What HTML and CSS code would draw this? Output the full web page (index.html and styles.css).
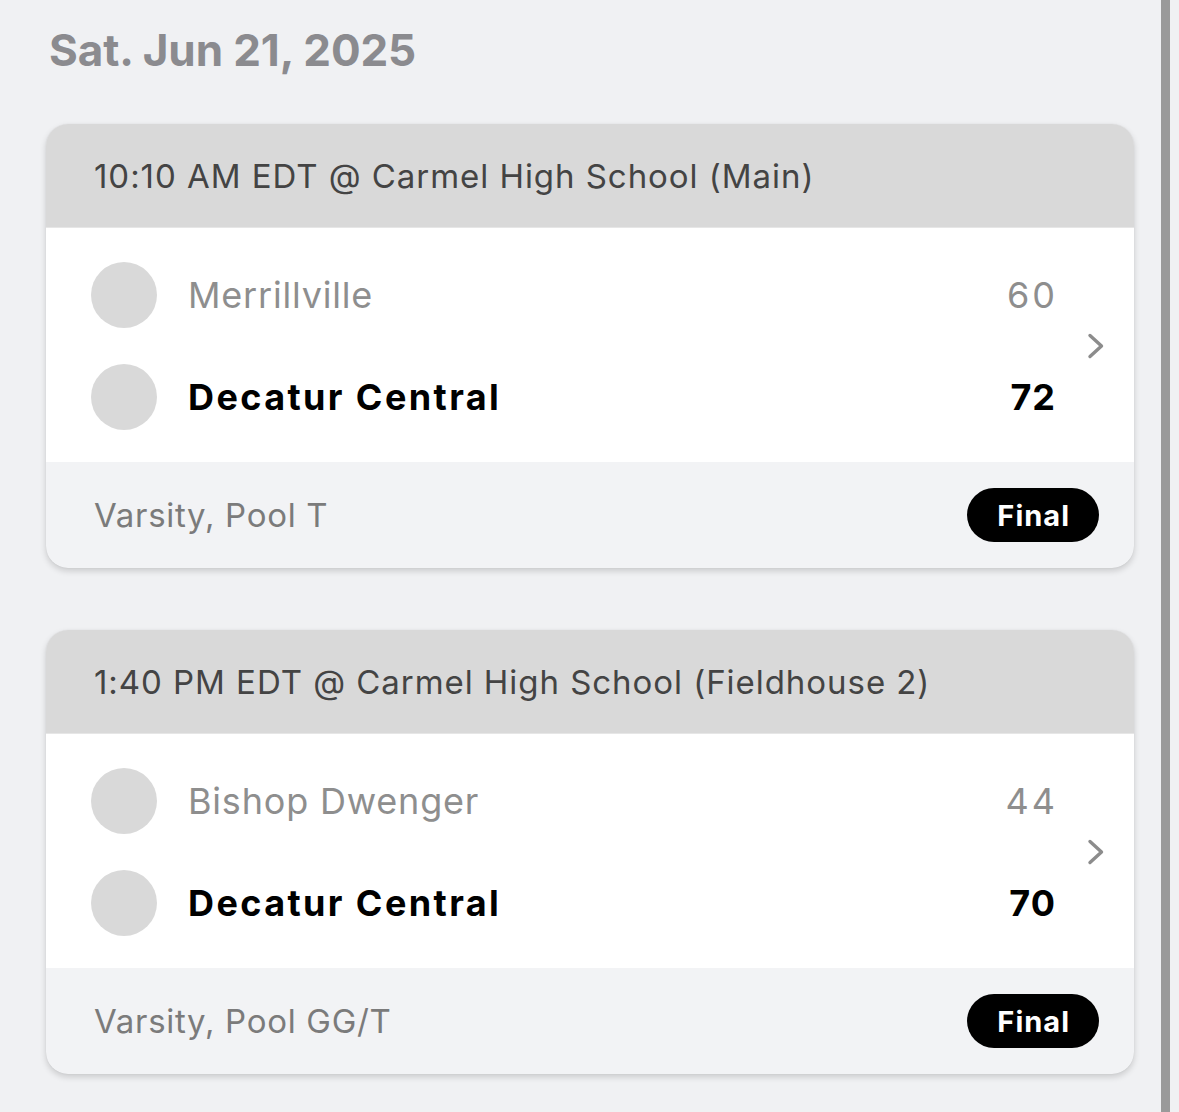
FILE: index.html
```html
<!DOCTYPE html>
<html lang="en">
<head>
<meta charset="utf-8">
<title>Schedule</title>
<link rel="stylesheet" href="styles.css">
</head>
<body>
<div class="page">
  <main class="content">
    <h1 class="date">Sat. Jun 21, 2025</h1>

    <section class="card">
      <header class="card-head">10:10 AM EDT @ Carmel High School (Main)</header>
      <div class="card-body">
        <div class="teams">
          <div class="team loser">
            <span class="logo"></span>
            <span class="name">Merrillville</span>
            <span class="score">60</span>
          </div>
          <div class="team winner">
            <span class="logo"></span>
            <span class="name">Decatur Central</span>
            <span class="score">72</span>
          </div>
        </div>
        <svg class="chevron" viewBox="0 0 20 28" width="20" height="28"><path d="M4 3.5 L15.5 14 L4 24.5" fill="none" stroke="#8c8c8c" stroke-width="3.4" stroke-linecap="round" stroke-linejoin="round"/></svg>
      </div>
      <footer class="card-foot">
        <span class="meta">Varsity, Pool T</span>
        <span class="badge">Final</span>
      </footer>
    </section>

    <section class="card">
      <header class="card-head">1:40 PM EDT @ Carmel High School (Fieldhouse 2)</header>
      <div class="card-body">
        <div class="teams">
          <div class="team loser">
            <span class="logo"></span>
            <span class="name">Bishop Dwenger</span>
            <span class="score">44</span>
          </div>
          <div class="team winner">
            <span class="logo"></span>
            <span class="name">Decatur Central</span>
            <span class="score">70</span>
          </div>
        </div>
        <svg class="chevron" viewBox="0 0 20 28" width="20" height="28"><path d="M4 3.5 L15.5 14 L4 24.5" fill="none" stroke="#8c8c8c" stroke-width="3.4" stroke-linecap="round" stroke-linejoin="round"/></svg>
      </div>
      <footer class="card-foot">
        <span class="meta">Varsity, Pool GG/T</span>
        <span class="badge">Final</span>
      </footer>
    </section>
  </main>
  <div class="scrollbar"></div>
</div>
</body>
</html>
```

FILE: styles.css
```css
html, body {
  margin: 0;
  padding: 0;
  background: #f0f1f3;
}

body {
  font-family: Inter, "Open Sans", "Liberation Sans", sans-serif;
  -webkit-font-smoothing: antialiased;
}

.page {
  display: flex;
  height: 100vh;
  overflow: hidden;
}

.content {
  flex: 1;
  padding: 0 27px 0 46px;
}

.scrollbar {
  width: 9px;
  background: #9a9a9a;
  margin-right: 9px;
  align-self: stretch;
}

.date {
  margin: 0;
  padding: 24px 0 0 3px;
  height: 100px;
  box-sizing: border-box;
  font-size: 44px;
  line-height: 52px;
  font-weight: 700;
  color: #8b8b8f;
  letter-spacing: -0.1px;
}

.card {
  background: #f2f3f5;
  border-radius: 22px;
  overflow: hidden;
  box-shadow: 0 3px 6px rgba(0, 0, 0, 0.16), 0 0 1px rgba(0, 0, 0, 0.12);
  margin-top: 24px;
  margin-bottom: 62px;
}

.card + .card {
  margin-top: 0;
  margin-bottom: 20px;
}

.card-head {
  background: #d9d9d9;
  display: flex;
  align-items: center;
  padding-left: 48px;
  font-size: 33px;
  letter-spacing: 0.95px;
  color: #444444;
  border-bottom: 1px solid #e6e6e6;
  box-sizing: border-box;
  height: 104px;
}

.card-body {
  background: #ffffff;
  display: flex;
  align-items: center;
  padding: 34px 28px 32px 45px;
}

.teams {
  flex: 1;
  display: flex;
  flex-direction: column;
  gap: 36px;
}

.team {
  display: flex;
  align-items: center;
  height: 66px;
}

.logo {
  width: 66px;
  height: 66px;
  border-radius: 50%;
  background: #d9d9d9;
  flex: none;
}

.name {
  flex: 1;
  margin-left: 31px;
  font-size: 36px;
}

.score {
  font-size: 36px;
}

.loser .name {
  color: #8e8e8e;
  font-weight: 400;
  letter-spacing: 0.8px;
}

.loser .score {
  color: #8e8e8e;
  font-weight: 400;
  letter-spacing: 3px;
  margin-right: -3px;
}

.winner .name {
  color: #000000;
  font-weight: 700;
  letter-spacing: 2.4px;
}

.winner .score {
  color: #000000;
  font-weight: 700;
  letter-spacing: 1px;
  margin-right: -1px;
}

.chevron {
  margin-left: 31px;
  flex: none;
}

.card-foot {
  height: 106px;
  display: flex;
  align-items: center;
  justify-content: space-between;
  padding: 0 35px 0 48px;
}

.meta {
  font-size: 33px;
  color: #7b7b7b;
  letter-spacing: 0.7px;
}

.badge {
  background: #000000;
  color: #ffffff;
  font-weight: 700;
  font-size: 29px;
  letter-spacing: 1px;
  height: 54px;
  padding: 0 29px 0 30px;
  border-radius: 27px;
  display: flex;
  align-items: center;
}
```
